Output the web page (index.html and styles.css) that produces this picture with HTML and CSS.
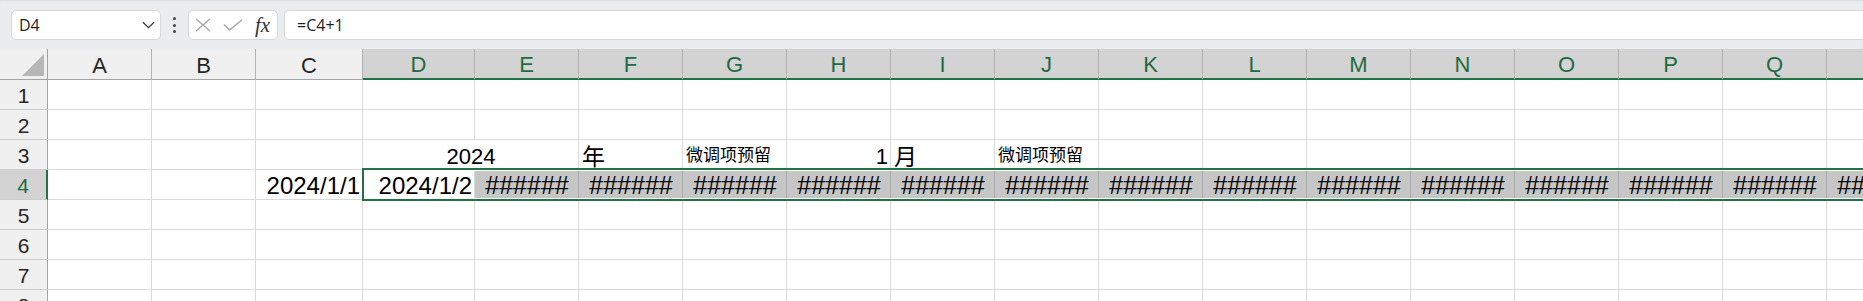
FILE: index.html
```html
<!DOCTYPE html>
<html lang="zh-CN">
<head>
  <meta charset="UTF-8">
  <title>Sheet1</title>
  <link rel="stylesheet" href="styles.css">
</head>
<body>

  <div class="toolbar">
    <div class="name-box">
      <span>D4</span>
      <svg width="13" height="8" viewBox="0 0 13 8"><path d="M1 1.2 L6.5 6.6 L12 1.2" fill="none" stroke="#3a3a3a" stroke-width="1.3"/></svg>
    </div>
    <div class="more"><i></i><i></i><i></i></div>
    <div class="fx-box">
      <svg width="16" height="14" viewBox="0 0 16 14"><path d="M1 1 L15 13 M15 1 L1 13" stroke="#a6a6a6" stroke-width="1.3" fill="none"/></svg>
      <svg width="20" height="12" viewBox="0 0 20 12"><path d="M1 5.5 L6.5 11 L19 0.8" stroke="#a6a6a6" stroke-width="1.3" fill="none"/></svg>
      <span class="fx">fx</span>
    </div>
    <div class="formula">=C4+1</div>
  </div>

  <div class="sheet">
    <div class="row">
      <div class="corner"><svg width="22" height="22" viewBox="0 0 22 22"><polygon points="22,0 22,22 0,22" fill="#b6b6b6"/></svg></div>
      <div class="col">A</div><div class="col">B</div><div class="col">C</div>
      <div class="col sel">D</div><div class="col sel">E</div><div class="col sel">F</div>
      <div class="col sel">G</div><div class="col sel">H</div><div class="col sel">I</div>
      <div class="col sel">J</div><div class="col sel">K</div><div class="col sel">L</div>
      <div class="col sel">M</div><div class="col sel">N</div><div class="col sel">O</div>
      <div class="col sel">P</div><div class="col sel">Q</div><div class="col sel">R</div>
    </div>

    <div class="row">
      <div class="rh">1</div>
      <div class="c"></div><div class="c"></div><div class="c"></div><div class="c"></div><div class="c"></div><div class="c"></div>
      <div class="c"></div><div class="c"></div><div class="c"></div><div class="c"></div><div class="c"></div><div class="c"></div>
      <div class="c"></div><div class="c"></div><div class="c"></div><div class="c"></div><div class="c"></div><div class="c"></div>
    </div>

    <div class="row">
      <div class="rh">2</div>
      <div class="c"></div><div class="c"></div><div class="c"></div><div class="c"></div><div class="c"></div><div class="c"></div>
      <div class="c"></div><div class="c"></div><div class="c"></div><div class="c"></div><div class="c"></div><div class="c"></div>
      <div class="c"></div><div class="c"></div><div class="c"></div><div class="c"></div><div class="c"></div><div class="c"></div>
    </div>

    <div class="row">
      <div class="rh">3</div>
      <div class="c"></div><div class="c"></div><div class="c"></div>
      <div class="c merged ctr mid">2024</div>
      <div class="c cjk">年</div>
      <div class="c cjk small">微调项预留</div>
      <div class="c r mid">1</div>
      <div class="c cjk">月</div>
      <div class="c cjk small">微调项预留</div>
      <div class="c"></div><div class="c"></div><div class="c"></div><div class="c"></div>
      <div class="c"></div><div class="c"></div><div class="c"></div><div class="c"></div>
    </div>

    <div class="row">
      <div class="rh sel">4</div>
      <div class="c"></div><div class="c"></div>
      <div class="c r">2024/1/1</div>
      <div class="c r">2024/1/2</div>
      <div class="c hl">######</div><div class="c hl">######</div><div class="c hl">######</div>
      <div class="c hl">######</div><div class="c hl">######</div><div class="c hl">######</div>
      <div class="c hl">######</div><div class="c hl">######</div><div class="c hl">######</div>
      <div class="c hl">######</div><div class="c hl">######</div><div class="c hl">######</div>
      <div class="c hl">######</div><div class="c hl">######</div>
    </div>

    <div class="row">
      <div class="rh">5</div>
      <div class="c"></div><div class="c"></div><div class="c"></div><div class="c"></div><div class="c"></div><div class="c"></div>
      <div class="c"></div><div class="c"></div><div class="c"></div><div class="c"></div><div class="c"></div><div class="c"></div>
      <div class="c"></div><div class="c"></div><div class="c"></div><div class="c"></div><div class="c"></div><div class="c"></div>
    </div>

    <div class="row">
      <div class="rh">6</div>
      <div class="c"></div><div class="c"></div><div class="c"></div><div class="c"></div><div class="c"></div><div class="c"></div>
      <div class="c"></div><div class="c"></div><div class="c"></div><div class="c"></div><div class="c"></div><div class="c"></div>
      <div class="c"></div><div class="c"></div><div class="c"></div><div class="c"></div><div class="c"></div><div class="c"></div>
    </div>

    <div class="row">
      <div class="rh">7</div>
      <div class="c"></div><div class="c"></div><div class="c"></div><div class="c"></div><div class="c"></div><div class="c"></div>
      <div class="c"></div><div class="c"></div><div class="c"></div><div class="c"></div><div class="c"></div><div class="c"></div>
      <div class="c"></div><div class="c"></div><div class="c"></div><div class="c"></div><div class="c"></div><div class="c"></div>
    </div>

    <div class="row">
      <div class="rh">8</div>
      <div class="c"></div><div class="c"></div><div class="c"></div><div class="c"></div><div class="c"></div><div class="c"></div>
      <div class="c"></div><div class="c"></div><div class="c"></div><div class="c"></div><div class="c"></div><div class="c"></div>
      <div class="c"></div><div class="c"></div><div class="c"></div><div class="c"></div><div class="c"></div><div class="c"></div>
    </div>

    <div class="sel-box"></div>
  </div>

</body>
</html>
```

FILE: styles.css
```css
body {
  margin: 0;
  width: 1863px;
  height: 301px;
  overflow: hidden;
  background: #fff;
  font-family: "Liberation Sans", "Noto Sans CJK SC", sans-serif;
  color: #000;
}

/* formula bar */

.toolbar {
  height: 49px;
  box-sizing: border-box;
  display: flex;
  align-items: flex-start;
  padding: 10px 0 0 11px;
  background: #eaedf0;
  box-shadow: inset 0 2px 2px -1px rgba(0, 0, 0, 0.08);
  font-family: "Open Sans", sans-serif;
  font-size: 15px;
  color: #1f1f1f;
}

.name-box,
.fx-box,
.formula {
  height: 30px;
  box-sizing: border-box;
  background: #fff;
  border: 1px solid #d6d9dc;
  border-radius: 5px;
  display: flex;
  align-items: center;
}

.name-box {
  width: 150px;
  padding: 0 5px 0 7px;
  justify-content: space-between;
  font-size: 16px;
}

.more {
  width: 27px;
  height: 30px;
  display: flex;
  flex-direction: column;
  align-items: center;
  justify-content: center;
  gap: 3.5px;
}

.more i {
  width: 3px;
  height: 3px;
  border-radius: 50%;
  background: #444;
}

.fx-box {
  width: 90px;
  padding: 0 0 0 6px;
}

.fx-box svg:nth-child(2) {
  margin-left: 12px;
}

.fx {
  margin-left: 12px;
  font-family: "Liberation Serif", serif;
  font-style: italic;
  font-size: 21px;
  color: #333;
}

.formula {
  flex: 1;
  margin: 0 -10px 0 6px;
  padding-left: 12px;
  font-size: 16px;
}

/* grid */

.sheet {
  position: relative;
}

.row {
  display: grid;
  grid-template-columns: 48px 104px 104px 107px 112px repeat(14, 104px);
}

.corner,
.col,
.rh,
.c {
  box-sizing: border-box;
  display: flex;
  align-items: flex-end;
  white-space: nowrap;
}

.corner {
  height: 31px;
  background: #f0f0f0;
  border-right: 1px solid #a3a3a3;
  border-bottom: 1px solid #a3a3a3;
  justify-content: flex-end;
  padding: 0 3px 3px 0;
}

.col {
  height: 31px;
  justify-content: center;
  background: #f0f0f0;
  border-right: 1px solid #b3b3b3;
  border-bottom: 1px solid #a3a3a3;
  font-size: 22px;
  line-height: 27px;
  color: #262626;
}

.col.sel {
  background: #d3d3d3;
  color: #1e6b41;
  border-bottom: 2px solid #217346;
}

.rh {
  height: 30px;
  justify-content: center;
  background: #f0f0f0;
  border-right: 1px solid #a3a3a3;
  border-bottom: 1px solid #cdcdcd;
  font-size: 21px;
  line-height: 27px;
  color: #262626;
}

.rh.sel {
  background: #d3d3d3;
  color: #1e6b41;
  border-right: 2px solid #217346;
}

.c {
  height: 30px;
  padding: 0 2px 0 3px;
  border-right: 1px solid #dadada;
  border-bottom: 1px solid #dadada;
  font-size: 24px;
  line-height: 27px;
}

.c.r {
  justify-content: flex-end;
}

.c.ctr {
  justify-content: center;
}

.c.mid {
  font-size: 22px;
  line-height: 25px;
}

.c.merged {
  grid-column: span 2;
}

.c.cjk {
  font-family: "Noto Sans CJK SC", sans-serif;
  font-size: 23px;
  line-height: 28px;
}

.c.cjk.small {
  font-size: 17px;
  line-height: 30px;
}

.c.hl {
  justify-content: center;
  background: #c6c6c6;
  border-right-color: #ababab;
  overflow: hidden;
  font-size: 25px;
}

.sel-box {
  position: absolute;
  left: 362px;
  top: 119px;
  width: 1600px;
  height: 33px;
  box-sizing: border-box;
  border: 2px solid #217346;
  box-shadow: inset 0 0 0 1px #fff;
  pointer-events: none;
}
```
